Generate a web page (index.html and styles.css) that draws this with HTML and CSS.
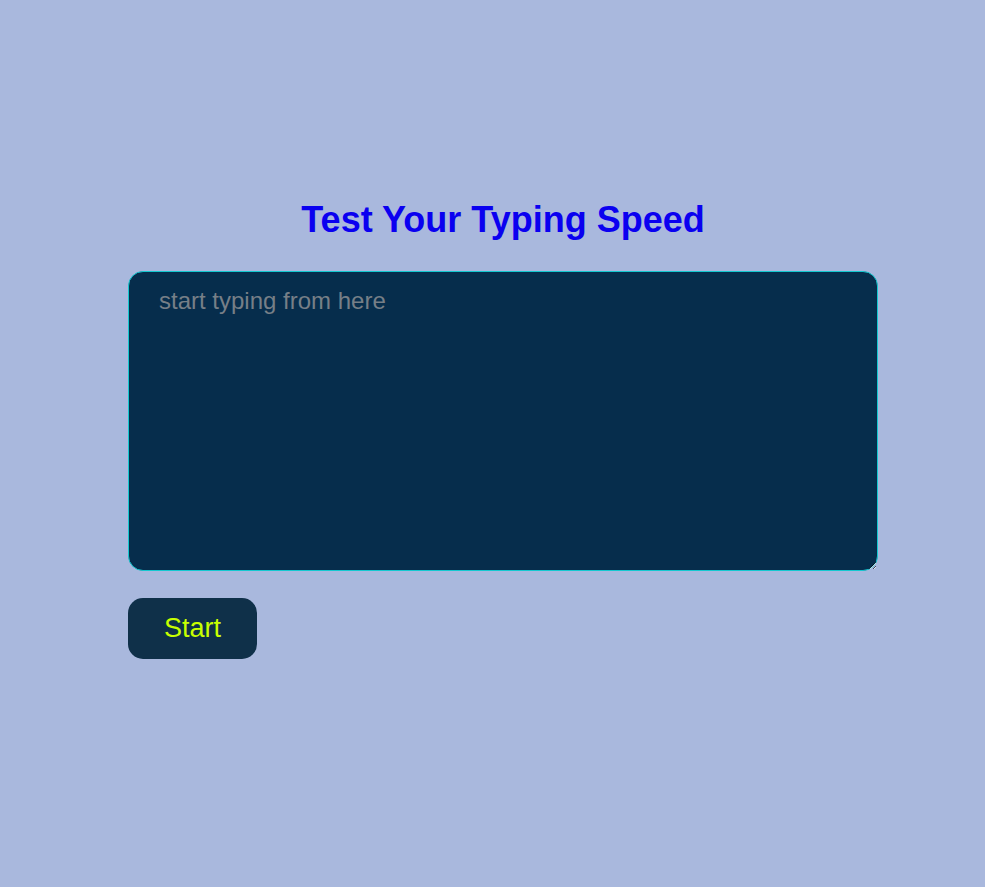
FILE: index.html
```html
<!DOCTYPE html>
<html>
<head>
<meta charset="utf-8">
<link rel="stylesheet" href="styles.css">
</head>
<body>
<div class="page">
  <main class="container">
    <h1 class="title">Test Your Typing Speed</h1>
    <textarea class="typing-area" placeholder="start typing from here"></textarea>
    <div class="actions">
      <button class="start-btn">Start</button>
    </div>
  </main>
</div>
</body>
</html>
```
FILE: styles.css
```css
html, body {
  margin: 0;
  padding: 0;
  background: #a9b8dd;
  font-family: "Liberation Sans", Arial, sans-serif;
}
.page {
  padding-left: 21px;
  padding-top: 196px;
}
.container {
  width: 750px;
  margin: 0 auto;
  display: flex;
  flex-direction: column;
}
.title {
  margin: 0 0 28px;
  text-align: center;
  color: #0a00f0;
  font-size: 36px;
  font-weight: bold;
  line-height: 47px;
}
.typing-area {
  box-sizing: border-box;
  width: 750px;
  height: 300px;
  background: #062d4c;
  border: 1px solid #14c8d0;
  border-radius: 15px;
  padding: 15px 30px;
  font-family: "Liberation Sans", Arial, sans-serif;
  font-size: 24px;
  color: #ddd;
  outline: none;
  display: block;
}
.typing-area::placeholder {
  color: #767f87;
}
.actions {
  margin-top: 27px;
}
.start-btn {
  width: 129px;
  height: 61px;
  background: #0f3049;
  border: none;
  border-radius: 15px;
  color: #c8ff00;
  font-family: "Liberation Sans", Arial, sans-serif;
  font-size: 27px;
  padding: 0;
}
```
